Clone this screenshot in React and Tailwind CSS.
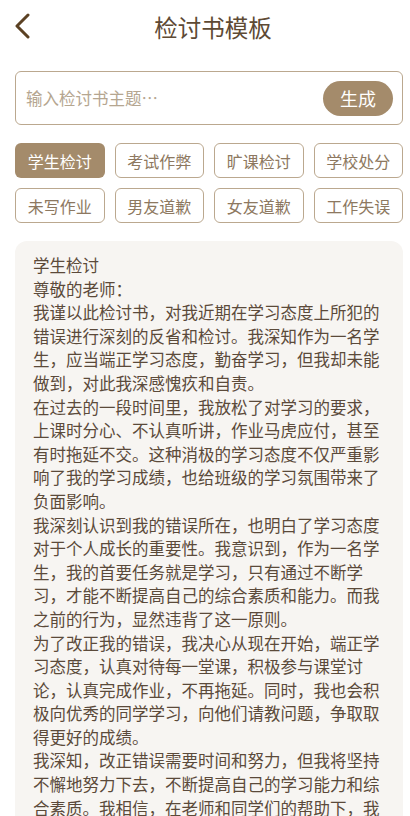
import { useState } from 'react'

const TAGS = ['学生检讨', '考试作弊', '旷课检讨', '学校处分', '未写作业', '男友道歉', '女友道歉', '工作失误']

const PARAS = [
  '学生检讨',
  '尊敬的老师：',
  '我谨以此检讨书，对我近期在学习态度上所犯的错误进行深刻的反省和检讨。我深知作为一名学生，应当端正学习态度，勤奋学习，但我却未能做到，对此我深感愧疚和自责。',
  '在过去的一段时间里，我放松了对学习的要求，上课时分心、不认真听讲，作业马虎应付，甚至有时拖延不交。这种消极的学习态度不仅严重影响了我的学习成绩，也给班级的学习氛围带来了负面影响。',
  '我深刻认识到我的错误所在，也明白了学习态度对于个人成长的重要性。我意识到，作为一名学生，我的首要任务就是学习，只有通过不断学习，才能不断提高自己的综合素质和能力。而我之前的行为，显然违背了这一原则。',
  '为了改正我的错误，我决心从现在开始，端正学习态度，认真对待每一堂课，积极参与课堂讨论，认真完成作业，不再拖延。同时，我也会积极向优秀的同学学习，向他们请教问题，争取取得更好的成绩。',
  '我深知，改正错误需要时间和努力，但我将坚持不懈地努力下去，不断提高自己的学习能力和综合素质。我相信，在老师和同学们的帮助下，我一定能够改正错误，取得进步。',
]

const font = { fontFamily: '"Noto Sans CJK SC", "Noto Sans", sans-serif' }

export default function App() {
  const [active, setActive] = useState(0)

  return (
    <div className="w-[410px] h-[816px] overflow-hidden bg-white" style={font}>
      {/* header */}
      <div className="relative flex items-center justify-center h-[56px] pl-[16px]">
        <button className="absolute left-[13px] top-[13px]">
          <svg width="20" height="26" viewBox="0 0 20 26" fill="none">
            <path d="M15 2 L4 13 L15 24" stroke="#5b4123" strokeWidth="3" strokeLinecap="round" strokeLinejoin="round" />
          </svg>
        </button>
        <h1 className="text-[23.5px] text-[#5e4a34]">检讨书模板</h1>
      </div>

      {/* input */}
      <div className="ml-[15px] mr-[7px] mt-[15px] h-[54px] border border-[#bba88f] rounded-[6px] flex items-center pl-[10px] pr-[9px]">
        <input
          className="flex-1 min-w-0 outline-none bg-transparent text-[16.5px] text-[#5e4a34] placeholder:text-[#b5a690]"
          placeholder="输入检讨书主题…"
        />
        <button className="w-[70px] h-[35px] rounded-full bg-[#a48b6b] text-white text-[18px]">生成</button>
      </div>

      {/* tags */}
      <div className="ml-[15px] mr-[7px] mt-[18px] grid grid-cols-4 gap-x-[10px] gap-y-[10px]">
        {TAGS.map((t, i) => (
          <button
            key={t}
            onClick={() => setActive(i)}
            className={
              i === active
                ? 'h-[35px] rounded-[6px] bg-[#a48b6b] text-white text-[16px]'
                : 'h-[35px] rounded-[6px] border border-[#bba88f] text-[#8d7860] text-[16px]'
            }
          >
            {t}
          </button>
        ))}
      </div>

      {/* content */}
      <div className="ml-[15px] mr-[7px] mt-[18px] bg-[#f7f5f2] rounded-[12px] px-[18px] pt-[13px] pb-[20px]">
        {PARAS.map((p, i) => (
          <p key={i} className="text-[16.5px] leading-[23.6px] text-[#5b4a3a]">
            {p}
          </p>
        ))}
      </div>
    </div>
  )
}
